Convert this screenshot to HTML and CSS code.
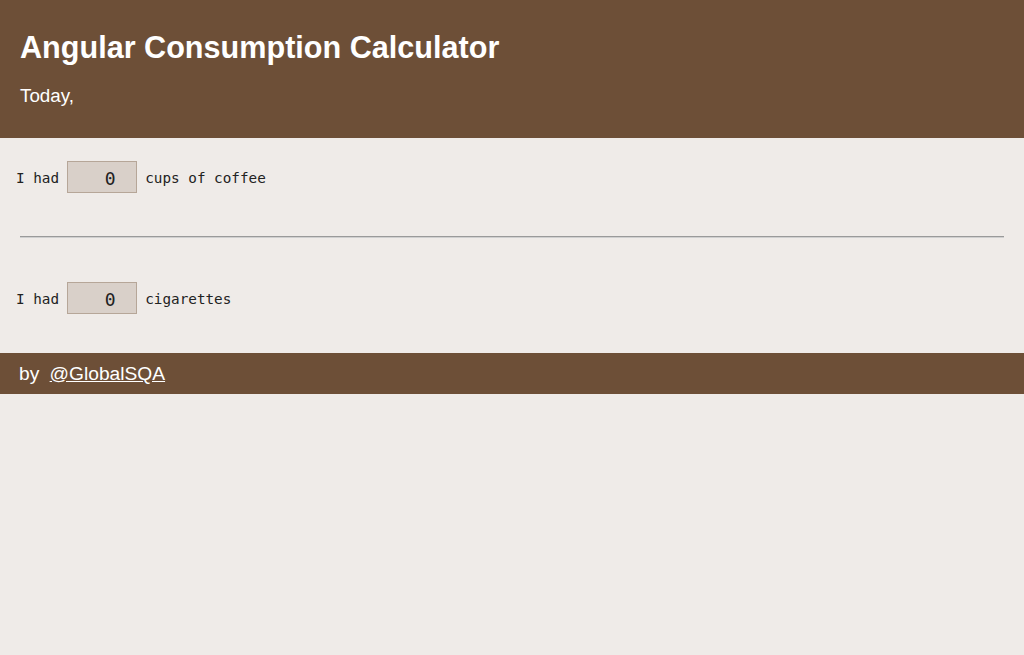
FILE: index.html
```html
<!DOCTYPE html>
<html>
<head>
<meta charset="utf-8">
<title>Angular Consumption Calculator</title>
<link rel="stylesheet" href="styles.css">
</head>
<body>
<header class="top">
  <h1 class="title">Angular Consumption Calculator</h1>
  <p class="today">Today,</p>
</header>
<main class="content">
  <div class="row">I had <input class="count" type="text" value="0"> cups of coffee</div>
  <hr class="divider">
  <div class="row">I had <input class="count" type="text" value="0"> cigarettes</div>
</main>
<footer class="bottom">by <a class="link" href="#">@GlobalSQA</a></footer>
</body>
</html>
```
FILE: styles.css
```css
html, body {
  margin: 0;
  padding: 0;
  background: #efebe8;
}
body {
  font-family: "Liberation Sans", Arial, sans-serif;
}
.top {
  background: #6d4f37;
  color: #fff;
  padding: 31px 20px 30px;
}
.title {
  margin: 0;
  font-size: 30.6px;
  line-height: 33px;
  font-weight: bold;
}
.today {
  margin: 19px 0 0;
  font-size: 18.8px;
  line-height: 25px;
}
.content {
  padding: 23px 0 39px;
}
.row {
  font-family: "DejaVu Sans Mono", monospace;
  font-size: 14.3px;
  color: #222;
  padding-left: 16px;
  height: 32px;
  line-height: 35px;
}
.count {
  box-sizing: border-box;
  width: 70px;
  height: 32px;
  border: 1px solid #b6a698;
  background: #d9d0c9;
  font-family: "DejaVu Sans Mono", monospace;
  font-size: 18px;
  color: #222;
  text-align: right;
  padding: 2px 20px 0 0;
  margin: 0 0 0 -1px;
  vertical-align: top;
}
.divider {
  margin: 43px 20px 44px;
  border: 0;
  border-top: 1px solid #9a9a9a;
  border-bottom: 1px solid #cfcfcf;
  height: 0;
}
.bottom {
  background: #6d4f37;
  color: #fff;
  font-size: 19.2px;
  height: 41px;
  line-height: 41px;
  padding: 0 19px;
}
.link {
  color: #fff;
  margin-left: 5px;
}
```
